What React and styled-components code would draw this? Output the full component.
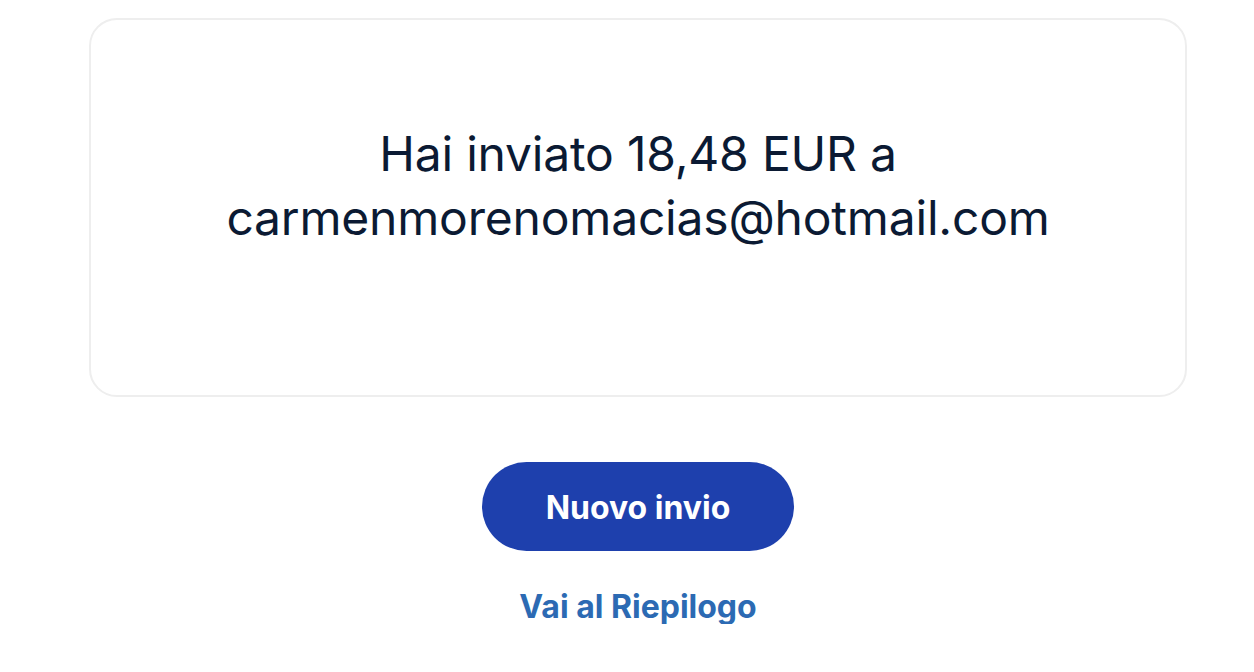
import React from "react";
import styled, { createGlobalStyle } from "styled-components";

const Global = createGlobalStyle`
  html, body { margin: 0; padding: 0; background: #ffffff; }
  body { font-family: Inter, "Liberation Sans", sans-serif; }
`;

const Page = styled.main`
  display: flex;
  flex-direction: column;
  align-items: center;
  padding: 18px 0 0 22px;
`;

const Card = styled.section`
  box-sizing: border-box;
  width: 1098px;
  height: 379px;
  border: 2px solid #eeeeee;
  border-radius: 28px;
  display: flex;
  justify-content: center;
  padding-top: 102px;
`;

const Message = styled.h1`
  margin: 0;
  font-size: 48px;
  font-weight: 400;
  line-height: 64px;
  color: #0b1a33;
  text-align: center;
  letter-spacing: -0.2px;
`;

const Actions = styled.div`
  display: flex;
  flex-direction: column;
  align-items: center;
  margin-top: 65px;
  gap: 39px;
`;

const PrimaryButton = styled.button`
  width: 312px;
  height: 89px;
  border: none;
  border-radius: 45px;
  background: #1e40ad;
  color: #ffffff;
  font-family: inherit;
  font-size: 32px;
  font-weight: 700;
  padding-top: 3px;
  cursor: pointer;
`;

const LinkButton = styled.a`
  font-size: 32px;
  font-weight: 700;
  color: #2c6ab3;
  text-decoration: none;
  line-height: 34px;
`;

export default function App() {
  return (
    <>
      <Global />
      <Page>
        <Card>
          <Message>
            Hai inviato 18,48 EUR a
            <br />
            carmenmorenomacias@hotmail.com
          </Message>
        </Card>
        <Actions>
          <PrimaryButton>Nuovo invio</PrimaryButton>
          <LinkButton href="#">Vai al Riepilogo</LinkButton>
        </Actions>
      </Page>
    </>
  );
}
